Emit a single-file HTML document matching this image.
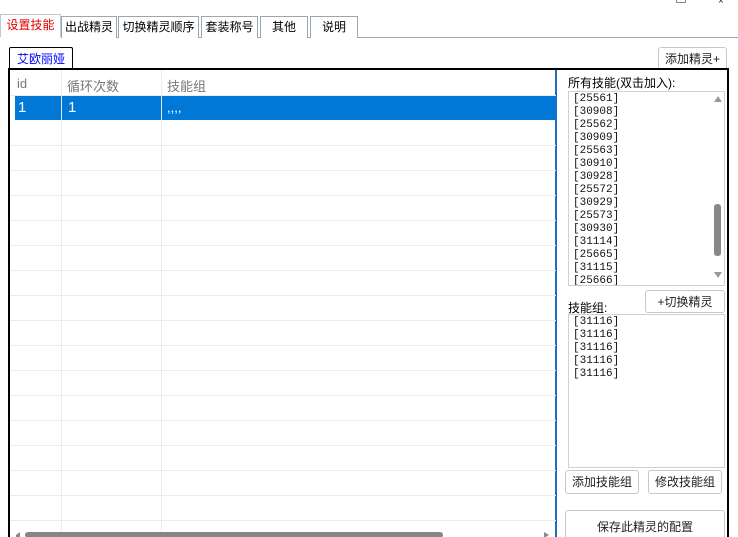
<!DOCTYPE html>
<html style="width:738px;height:537px;overflow:hidden"><head><meta charset="utf-8"><style>
*{box-sizing:border-box;margin:0;padding:0}
body{width:738px;height:537px;overflow:hidden;background:#fff;font-family:"Liberation Sans","Noto Sans CJK SC",sans-serif;font-size:12px;position:relative;color:#000}
.a{position:absolute}
.tab{position:absolute;top:16px;height:22px;border:1px solid #9aa6b0;border-bottom:none;background:#fff;text-align:center;line-height:21px;font-size:12px}
.btn{position:absolute;border:1px solid #c8c8c8;border-radius:3px;background:#fff;text-align:center;font-size:12px;color:#222}
.hl{position:absolute;left:10px;width:546px;height:1px;background:#ececec}
.vl{position:absolute;width:1px;background:#ececec;top:70px;height:467px}
.li{font-family:"Liberation Mono","Noto Sans CJK SC",monospace;font-size:11px;line-height:13px;color:#111}
</style></head><body>
<div class="a" style="left:676px;top:0;width:10px;height:3px;border:1px solid #888;border-top:none"></div>
<div class="a" style="left:718px;top:-4px;font-size:10px;color:#333">×</div>
<div class="a" style="left:0;top:37px;width:738px;height:1px;background:#9aa6b0"></div>
<div class="tab" style="left:0;top:14px;width:61px;height:24px;color:#e00000;border-color:#c0c8d0">设置技能</div>
<div class="tab" style="left:61px;width:56px">出战精灵</div>
<div class="tab" style="left:118px;width:81px">切换精灵顺序</div>
<div class="tab" style="left:201px;width:57px">套装称号</div>
<div class="tab" style="left:260px;width:48px">其他</div>
<div class="tab" style="left:310px;width:48px">说明</div>
<div class="a" style="left:0;top:37px;width:61px;height:1px;background:#fff"></div>

<div class="a" style="left:9px;top:47px;width:64px;height:23px;border:1px solid #000;border-bottom:none;border-radius:2px 2px 0 0;color:#0000ff;text-align:center;line-height:22px">艾欧丽娅</div>
<div class="btn" style="left:658px;top:47px;width:69px;height:23px;line-height:22px">添加精灵+</div>

<div class="a" style="left:8px;top:68px;width:721px;height:490px;border:2px solid #000"></div>
<div class="a" style="left:10px;top:70px;width:547px;height:480px;border-right:2px solid #1a6fc4;background:#fff"></div>

<div class="vl" style="left:61px"></div>
<div class="vl" style="left:161px"></div>
<div class="hl" style="top:95px"></div>
<div class="hl" style="top:145px"></div><div class="hl" style="top:170px"></div><div class="hl" style="top:195px"></div><div class="hl" style="top:220px"></div><div class="hl" style="top:245px"></div><div class="hl" style="top:270px"></div><div class="hl" style="top:295px"></div><div class="hl" style="top:320px"></div><div class="hl" style="top:345px"></div><div class="hl" style="top:370px"></div><div class="hl" style="top:395px"></div><div class="hl" style="top:420px"></div><div class="hl" style="top:445px"></div><div class="hl" style="top:470px"></div><div class="hl" style="top:495px"></div><div class="hl" style="top:520px"></div>
<div class="a" style="left:17px;top:76px;color:#777;font-size:13px">id</div>
<div class="a" style="left:67px;top:76px;color:#777;font-size:13px">循环次数</div>
<div class="a" style="left:167px;top:76px;color:#777;font-size:13px">技能组</div>
<div class="a" style="left:15px;top:96px;width:540px;height:24px;background:#0078d7"></div>
<div class="a" style="left:61px;top:96px;width:1px;height:24px;background:#e8e8e8"></div>
<div class="a" style="left:161px;top:96px;width:1px;height:24px;background:#e8e8e8"></div>
<div class="a" style="left:18px;top:99px;color:#fff;font-size:15px">1</div>
<div class="a" style="left:68px;top:99px;color:#fff;font-size:15px">1</div>
<div class="a" style="left:167px;top:100px;color:#fff;font-size:13px">,,,,</div>
<div class="a" style="left:16px;top:532px;width:4px;height:5px;border-right:4px solid #888;border-top:3px solid transparent"></div>
<div class="a" style="left:25px;top:532px;width:418px;height:6px;background:#858585;border-radius:3px"></div>
<div class="a" style="left:544px;top:532px;width:0;height:0;border-left:5px solid #888;border-top:3px solid transparent;border-bottom:3px solid transparent"></div>

<div class="a" style="left:568px;top:74px;font-size:12px">所有技能(双击加入):</div>
<div class="a" style="left:568px;top:91px;width:157px;height:195px;border:1px solid #d0d0d0;overflow:hidden">
<div class="li" style="padding:1px 0 0 4px">[25561]<br>[30908]<br>[25562]<br>[30909]<br>[25563]<br>[30910]<br>[30928]<br>[25572]<br>[30929]<br>[25573]<br>[30930]<br>[31114]<br>[25665]<br>[31115]<br>[25666]</div>
</div>
<div class="a" style="left:714px;top:96px;width:0;height:0;border-bottom:6px solid #999;border-left:4px solid transparent;border-right:4px solid transparent"></div>
<div class="a" style="left:714px;top:204px;width:7px;height:52px;background:#888;border-radius:3px"></div>
<div class="a" style="left:714px;top:272px;width:0;height:0;border-top:6px solid #999;border-left:4px solid transparent;border-right:4px solid transparent"></div>

<div class="btn" style="left:645px;top:290px;width:80px;height:23px;line-height:22px">+切换精灵</div>
<div class="a" style="left:568px;top:299px">技能组:</div>
<div class="a" style="left:568px;top:314px;width:157px;height:154px;border:1px solid #d0d0d0">
<div class="li" style="padding:1px 0 0 4px">[31116]<br>[31116]<br>[31116]<br>[31116]<br>[31116]</div></div>
<div class="btn" style="left:565px;top:470px;width:74px;height:24px;line-height:23px">添加技能组</div>
<div class="btn" style="left:648px;top:470px;width:74px;height:24px;line-height:23px">修改技能组</div>
<div class="btn" style="left:565px;top:510px;width:160px;height:34px;line-height:32px">保存此精灵的配置</div>
</body></html>
